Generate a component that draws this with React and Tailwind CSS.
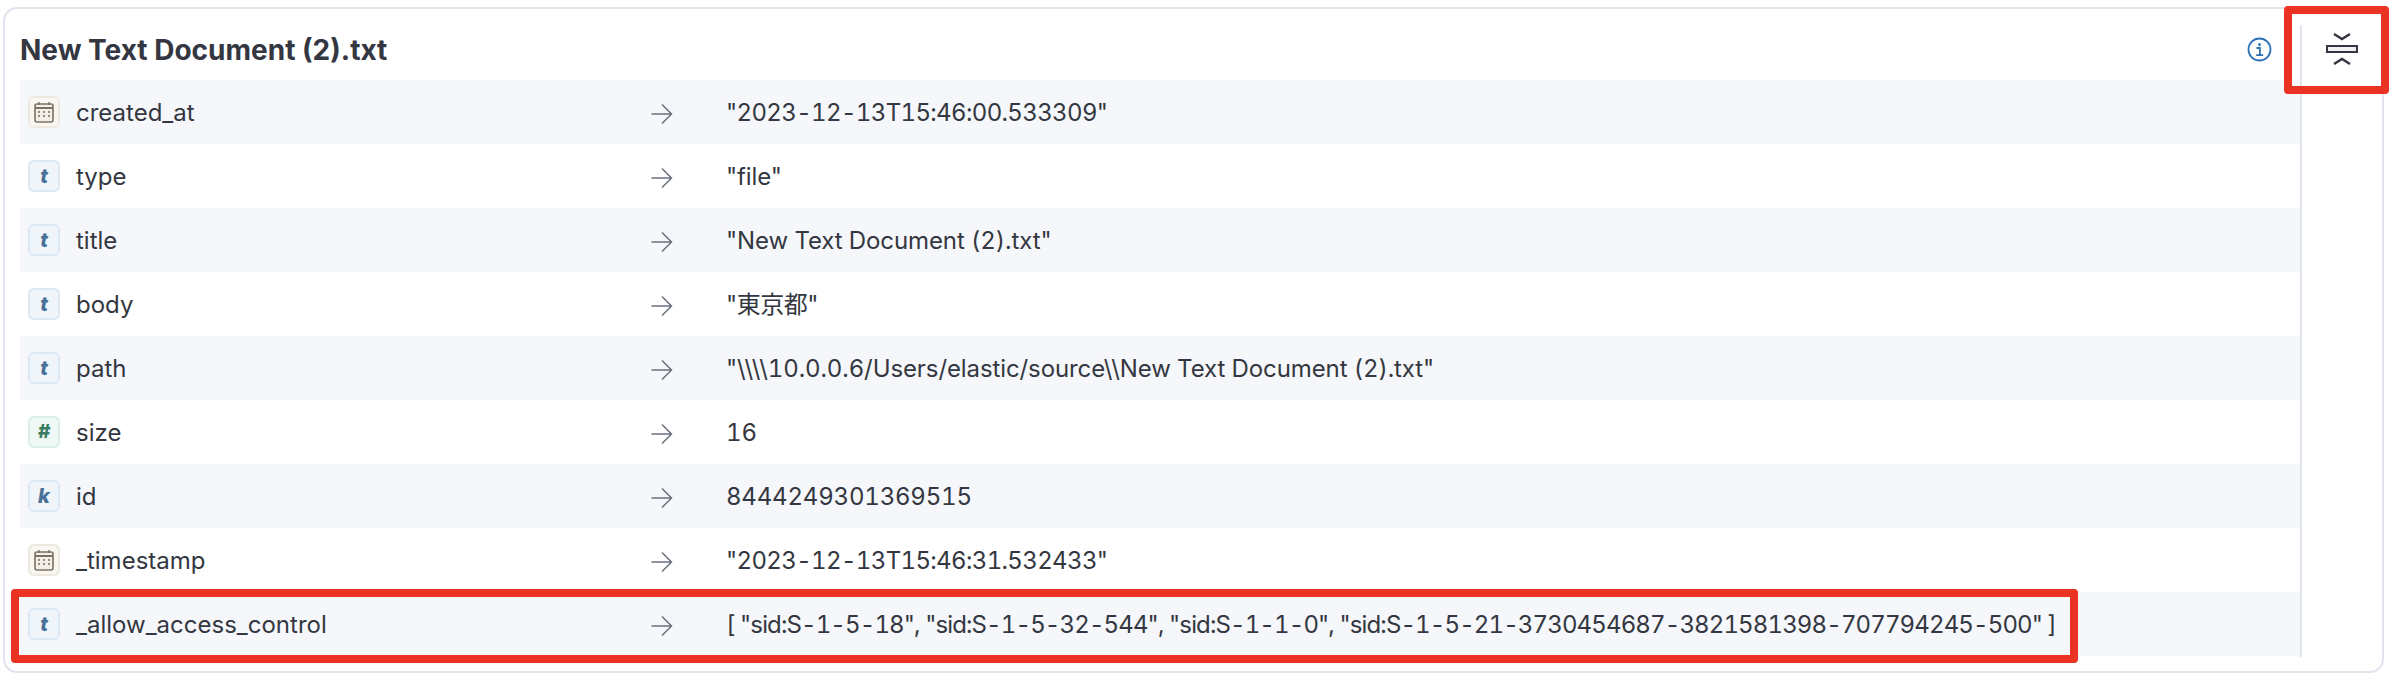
const rows = [
  { type: "date", name: "created_at", value: '"2023-12-13T15:46:00.533309"', spacing: "tracking-[-0.65px]" },
  { type: "t", name: "type", value: '"file"', spacing: "tracking-[-0.1px]" },
  { type: "t", name: "title", value: '"New Text Document (2).txt"', spacing: "tracking-[-0.1px]" },
  { type: "t", name: "body", value: '"東京都"', spacing: "tracking-[-0.5px]" },
  { type: "t", name: "path", value: '"\\\\\\\\10.0.0.6/Users/elastic/source\\\\New Text Document (2).txt"', spacing: "tracking-[-0.1px]" },
  { type: "#", name: "size", value: "16", spacing: "tracking-[0px]" },
  { type: "k", name: "id", value: "8444249301369515", spacing: "tracking-[-0.2px]" },
  { type: "date", name: "_timestamp", value: '"2023-12-13T15:46:31.532433"', spacing: "tracking-[-0.65px]" },
  { type: "t", name: "_allow_access_control", value: '[ "sid:S-1-5-18", "sid:S-1-5-32-544", "sid:S-1-1-0", "sid:S-1-5-21-3730454687-3821581398-707794245-500" ]', spacing: "tracking-[-0.88px]" },
];

function Calendar() {
  return (
    <svg width="20" height="22" viewBox="0 0 20 22" fill="none" stroke="#7d7262">
      <rect x="1" y="3" width="18" height="18" rx="2" strokeWidth="1.6" fill="#f3efe8" />
      <path d="M1 7h18" strokeWidth="2" />
      <path d="M5 1v3M15 1v3" strokeWidth="1.4" />
      <path d="M5 10v2M10 10v2M15 10v2M5 14v2M10 14v2M15 14v2" strokeWidth="1.6" />
    </svg>
  );
}

function Token({ type }) {
  if (type === "date") {
    return (
      <div className="flex h-8 w-8 items-center justify-center rounded-md border-2 border-[#eee9df] bg-[#f8f6f1]">
        <Calendar />
      </div>
    );
  }
  if (type === "#") {
    return (
      <div className="flex h-8 w-8 items-center justify-center rounded-md border-2 border-[#d9efe7] bg-[#eef8f4] text-[19px] font-extrabold italic text-[#3d7a63]">
        #
      </div>
    );
  }
  return (
    <div className="flex h-8 w-8 items-center justify-center rounded-md border-2 border-[#dbe7f3] bg-[#f0f5fa] text-[20px] font-extrabold italic text-[#4a7199]">
      {type}
    </div>
  );
}

function Arrow() {
  return (
    <svg className="mt-1" width="22" height="22" viewBox="0 0 22 22" fill="none" stroke="#69707d" strokeWidth="1.5">
      <path d="M0.5 11h20M11 1.5l9.5 9.5-9.5 9.5" />
    </svg>
  );
}

function Info() {
  return (
    <svg width="25" height="25" viewBox="0 0 25 25" fill="none">
      <circle cx="12.5" cy="12.5" r="11" stroke="#2f72b5" strokeWidth="1.8" />
      <circle cx="12.5" cy="7.5" r="1.5" fill="#2f72b5" />
      <path d="M9.5 11h3.4v7M9.2 18.2h7" stroke="#2f72b5" strokeWidth="1.8" />
    </svg>
  );
}

function Collapse() {
  return (
    <svg width="34" height="34" viewBox="0 0 34 34" fill="none" stroke="#343741" strokeWidth="2">
      <path d="M9 2l8 5 8-5M9 32l8-5 8 5" strokeWidth="2.4" />
      <rect x="2" y="14" width="30" height="6" fill="#f0f1f3" />
    </svg>
  );
}

export default function App() {
  return (
    <div className="relative h-[682px] w-[2404px] overflow-hidden bg-white text-[#343741] [font-family:Inter,'Noto_Sans_CJK_JP',sans-serif]">
      <div className="ml-[3px] mt-[7px] flex h-[666px] w-[2381px] rounded-[14px] border-2 border-[#dfe4ed]">
        <div className="w-[2295px] shrink-0 pl-[15px]">
          <div className="flex h-[71px] items-center justify-between pr-[28px] pt-[10px]">
            <h2 className="text-[28px] font-bold">New Text Document (2).txt</h2>
            <Info />
          </div>
          {rows.map((r, i) => (
            <div
              key={r.name}
              className={`flex h-16 items-center text-[24px] tabular-nums ${i % 2 === 0 ? "bg-[#f5f7fa]" : "bg-white"}`}
            >
              <div className="ml-2 flex w-[623px] shrink-0 items-center gap-4">
                <Token type={r.type} />
                <span className="pt-[1px]">{r.name}</span>
              </div>
              <Arrow />
              <span className={`ml-[53px] whitespace-nowrap pt-[1px] ${r.spacing}`}>{r.value}</span>
            </div>
          ))}
        </div>
        <div className="mt-4 h-[632px] flex-1 border-l-2 border-[#dfe4ed]">
          <div className="flex h-[46px] items-center justify-center pr-[1px] pt-[1px]">
            <Collapse />
          </div>
        </div>
      </div>
      <div className="pointer-events-none absolute left-[2284px] top-[6px] h-[88px] w-[105px] rounded-[4px] border-8 border-[#ea3323]" />
      <div className="pointer-events-none absolute left-[11px] top-[589px] h-[74px] w-[2067px] rounded-[4px] border-8 border-[#ea3323]" />
    </div>
  );
}
